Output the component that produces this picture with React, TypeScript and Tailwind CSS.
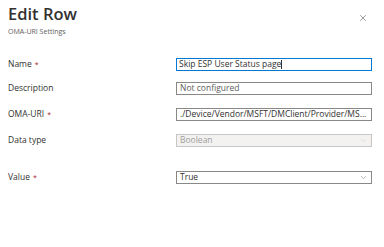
import { ChevronDown, X } from 'lucide-react'

const font = { fontFamily: '"Open Sans", "Noto Sans", sans-serif' }

function Label({ text, required }: { text: string; required?: boolean }) {
  return (
    <div className="w-[168px] shrink-0 text-[8.5px] text-[#323130]">
      {text}
      {required && <span className="ml-[3px] text-[7px] text-[#a4262c]">*</span>}
    </div>
  )
}

export default function App() {
  return (
    <div className="w-[384px] h-[247px] bg-white" style={font}>
      <div className="flex items-start justify-between pl-2 pr-4 pt-[3px]">
        <div>
          <h1 className="text-[16.5px] font-semibold leading-[22px] text-[#323130]">Edit Row</h1>
          <p className="text-[7px] leading-[10px] text-[#605e5c] mt-[2px]">OMA-URI Settings</p>
        </div>
        <X className="mt-[10px] h-[10px] w-[10px] text-[#605e5c]" strokeWidth={1.5} />
      </div>

      <div className="pl-2 pr-3 mt-[21px]">
        <div className="flex items-center h-[13px]">
          <Label text="Name" required />
          <div className="flex-1 h-[13px] border-[1.5px] border-[#0078d4] flex items-center px-[2px] text-[8.5px] text-[#323130]">
            Skip ESP User Status page<span className="w-px h-[9px] bg-[#323130]" />
          </div>
        </div>

        <div className="flex items-center h-[13px] mt-[11px]">
          <Label text="Description" />
          <div className="flex-1 h-[13px] border border-[#8a8886] flex items-center px-[3px] text-[8.5px] text-[#605e5c]">
            Not configured
          </div>
        </div>

        <div className="flex items-center h-[13px] mt-[13px]">
          <Label text="OMA-URI" required />
          <div className="flex-1 h-[13px] border border-[#8a8886] flex items-center px-[3px] text-[8.5px] text-[#323130] overflow-hidden whitespace-nowrap">
            ./Device/Vendor/MSFT/DMClient/Provider/MS...
          </div>
        </div>

        <div className="flex items-center h-[13px] mt-[13px]">
          <Label text="Data type" />
          <div className="flex-1 h-[13px] border border-[#c8c6c4] bg-[#f3f2f1] flex items-center justify-between px-[3px] text-[8.5px] text-[#a19f9d]">
            <span>Boolean</span>
            <ChevronDown className="h-[9px] w-[9px] text-[#c8c6c4]" strokeWidth={1.2} />
          </div>
        </div>

        <div className="flex items-center h-[13px] mt-[24px]">
          <Label text="Value" required />
          <div className="flex-1 h-[13px] border border-[#8a8886] flex items-center justify-between px-[3px] text-[8.5px] text-[#323130]">
            <span>True</span>
            <ChevronDown className="h-[9px] w-[9px] text-[#605e5c]" strokeWidth={1.2} />
          </div>
        </div>
      </div>
    </div>
  )
}
